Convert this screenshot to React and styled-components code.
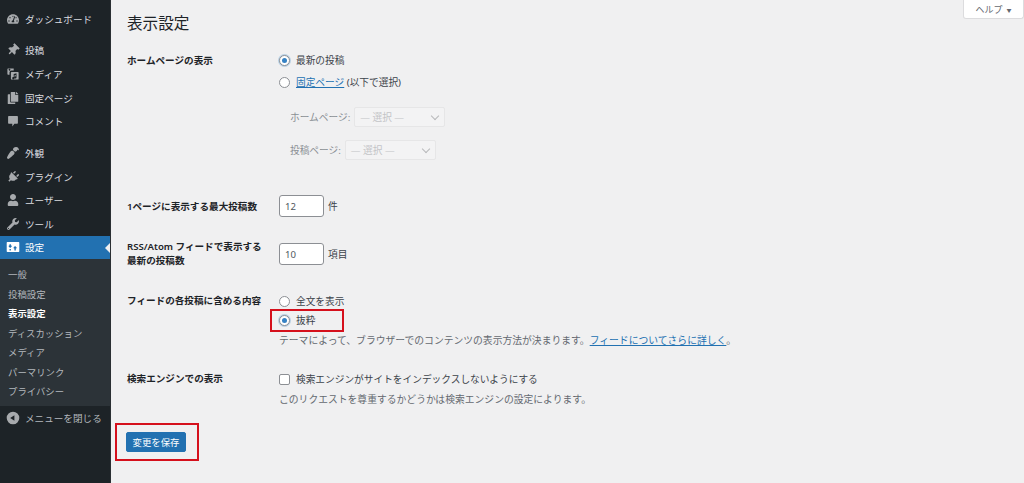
import React from 'react'
import styled, { createGlobalStyle } from 'styled-components'
import { FaTachometerAlt, FaThumbtack, FaCopy, FaPaintBrush, FaPlug, FaUser, FaWrench } from 'react-icons/fa'

const GlobalStyle = createGlobalStyle`
    html, body { margin: 0; padding: 0; height: 483px; overflow: hidden; background: #f0f0f1; }
    body { font-family: "Noto Sans", "Noto Sans CJK JP", sans-serif; color: #3c434a; }
    * { box-sizing: border-box; }
`

const MediaIcon = () => (
    <svg viewBox="0 0 20 20" width="14" height="14" fill="currentColor">
        <path d="M3 2h8v3H8a3 3 0 0 0-3 3v3H3a1 1 0 0 1-1-1V3a1 1 0 0 1 1-1zm3.2 2a1.2 1.2 0 1 0 0 .01z" fillRule="evenodd" />
        <path d="M8 7h9a1 1 0 0 1 1 1v9a1 1 0 0 1-1 1H8a1 1 0 0 1-1-1V8a1 1 0 0 1 1-1zm7 2-4 1v4.4a1.6 1.6 0 1 0 1 1.5V12l2-.5v2a1.6 1.6 0 1 0 1 1.5z" fillRule="evenodd" />
    </svg>
)

const CommentIcon = () => (
    <svg viewBox="0 0 20 20" width="14" height="14" fill="currentColor">
        <path d="M4 3h12a1 1 0 0 1 1 1v9a1 1 0 0 1-1 1h-4l-3 4v-4H4a1 1 0 0 1-1-1V4a1 1 0 0 1 1-1z" />
    </svg>
)

const SettingsIcon = () => (
    <svg viewBox="0 0 20 20" width="14" height="14" fill="currentColor">
        <path d="M2 3h16a1 1 0 0 1 1 1v12a1 1 0 0 1-1 1H2a1 1 0 0 1-1-1V4a1 1 0 0 1 1-1zm3 3v2H4v2h1v1h2v-1h1V8H7V6zm7 3v1h-1v2h1v3h2v-3h1v-2h-1V9zm-7 4v2h2v-2z" fillRule="evenodd" />
    </svg>
)

const CollapseIcon = () => (
    <svg viewBox="0 0 20 20" width="14" height="14" fill="currentColor">
        <path d="M10 1a9 9 0 1 1 0 18 9 9 0 0 1 0-18zm2 5-6 4 6 4z" fillRule="evenodd" />
    </svg>
)

const menuGroups = [
    [{ label: 'ダッシュボード', icon: <FaTachometerAlt /> }],
    [
        { label: '投稿', icon: <FaThumbtack />, tilt: 45 },
        { label: 'メディア', icon: <MediaIcon /> },
        { label: '固定ページ', icon: <FaCopy /> },
        { label: 'コメント', icon: <CommentIcon /> },
    ],
    [
        { label: '外観', icon: <FaPaintBrush />, tilt: 180 },
        { label: 'プラグイン', icon: <FaPlug />, tilt: 45 },
        { label: 'ユーザー', icon: <FaUser /> },
        { label: 'ツール', icon: <FaWrench /> },
    ],
]

const subItems = ['一般', '投稿設定', '表示設定', 'ディスカッション', 'メディア', 'パーマリンク', 'プライバシー']

const App = () => {
    return (
        <Page>
            <GlobalStyle />
            <Sidebar>
                {menuGroups.map((group, i) => (
                    <MenuGroup key={i}>
                        {group.map((item) => (
                            <MenuItem key={item.label}>
                                <MenuIcon $tilt={item.tilt}>{item.icon}</MenuIcon>
                                {item.label}
                            </MenuItem>
                        ))}
                    </MenuGroup>
                ))}
                <ActiveItem>
                    <MenuIcon $active><SettingsIcon /></MenuIcon>
                    設定
                </ActiveItem>
                <SubMenu>
                    {subItems.map((item) => (
                        <SubItem key={item} $current={item === '表示設定'}>{item}</SubItem>
                    ))}
                </SubMenu>
                <CollapseItem>
                    <MenuIcon><CollapseIcon /></MenuIcon>
                    メニューを閉じる
                </CollapseItem>
            </Sidebar>

            <Main>
                <HelpTab>ヘルプ<HelpArrow>▼</HelpArrow></HelpTab>
                <Title>表示設定</Title>

                <FormRow $height={143}>
                    <Label $pad={1}>ホームページの表示</Label>
                    <Field>
                        <OptionLine><Radio $checked />最新の投稿</OptionLine>
                        <OptionLine $gap={8}><Radio /><TextLink>固定ページ</TextLink>&nbsp;(以下で選択)</OptionLine>
                        <SelectLine $top={18}>
                            ホームページ:
                            <FakeSelect>— 選択 —<SelectArrow /></FakeSelect>
                        </SelectLine>
                        <SelectLine $top={13}>
                            投稿ページ:
                            <FakeSelect>— 選択 —<SelectArrow /></FakeSelect>
                        </SelectLine>
                    </Field>
                </FormRow>

                <FormRow $height={48}>
                    <Label $pad={4}>1ページに表示する最大投稿数</Label>
                    <Field>
                        <NumberLine><NumberBox>12</NumberBox>件</NumberLine>
                    </Field>
                </FormRow>

                <FormRow $height={50}>
                    <Label $pad={-4}>RSS/Atom フィードで表示する<br />最新の投稿数</Label>
                    <Field>
                        <NumberLine><NumberBox>10</NumberBox>項目</NumberLine>
                    </Field>
                </FormRow>

                <FormRow $height={78}>
                    <Label>フィードの各投稿に含める内容</Label>
                    <Field>
                        <OptionLine><Radio />全文を表示</OptionLine>
                        <Marked>
                            <OptionLine $gap={5}><Radio $checked />抜粋</OptionLine>
                            <RedBox $top={1} $right={-29} $bottom={-5} $left={-9} />
                        </Marked>
                        <Description $top={7}>
                            テーマによって、ブラウザーでのコンテンツの表示方法が決まります。<TextLink>フィードについてさらに詳しく</TextLink>。
                        </Description>
                    </Field>
                </FormRow>

                <FormRow $height={57}>
                    <Label>検索エンジンでの表示</Label>
                    <Field>
                        <OptionLine><CheckBox />検索エンジンがサイトをインデックスしないようにする</OptionLine>
                        <Description $top={7}>このリクエストを尊重するかどうかは検索エンジンの設定によります。</Description>
                    </Field>
                </FormRow>

                <Marked $inline>
                    <SaveButton>変更を保存</SaveButton>
                    <RedBox $top={-9} $right={-13} $bottom={-9} $left={-11} />
                </Marked>
            </Main>
        </Page>
    )
}

const Page = styled.div`
    display: flex;
    width: 1024px;
    height: 483px;
    overflow: hidden;
`

const Sidebar = styled.nav`
    width: 111px;
    flex-shrink: 0;
    background: #1d2327;
    padding-top: 7px;
    border-right: 1px solid #2a2f33;
`

const MenuGroup = styled.div`
    margin-bottom: 8.1px;
`

const MenuItem = styled.div`
    display: flex;
    align-items: center;
    height: 23.6px;
    padding-left: 6px;
    font-size: 9.6px;
    color: #dcdee0;
`

const MenuIcon = styled.span`
    display: flex;
    align-items: center;
    justify-content: center;
    width: 14px;
    margin-right: 5px;
    font-size: 12px;
    color: ${(props) => (props.$active ? '#fff' : '#a7aaad')};
    transform: rotate(${(props) => props.$tilt || 0}deg);
`

const ActiveItem = styled(MenuItem)`
    position: relative;
    margin-top: -8.1px;
    background: #2271b1;
    color: #fff;

    &::after {
        content: '';
        position: absolute;
        right: 0;
        top: 7px;
        border: 5px solid transparent;
        border-right-color: #f0f0f1;
        border-left-width: 0;
    }
`

const SubMenu = styled.div`
    background: #2c3338;
    padding: 6px 0 4px;
`

const SubItem = styled.div`
    height: 19.5px;
    line-height: 19.5px;
    padding-left: 8px;
    font-size: 9.4px;
    color: ${(props) => (props.$current ? '#fff' : '#b4b9be')};
    font-weight: ${(props) => (props.$current ? 700 : 400)};
`

const CollapseItem = styled(MenuItem)`
    margin-top: 1px;
    color: #b4b9be;
`

const Main = styled.main`
    position: relative;
    flex: 1;
    padding: 12px 0 0 16px;
`

const HelpTab = styled.div`
    position: absolute;
    top: 0;
    right: 0;
    width: 61px;
    height: 19px;
    display: flex;
    align-items: center;
    justify-content: center;
    gap: 4px;
    background: #fff;
    border: 1px solid #dcdcde;
    border-top: 0;
    border-radius: 0 0 3px 3px;
    font-size: 9px;
    color: #646970;
`

const HelpArrow = styled.span`
    font-size: 5px;
`

const Title = styled.h1`
    margin: 0 0 19px;
    height: 22px;
    line-height: 22px;
    font-size: 15.6px;
    font-weight: 400;
    color: #1d2327;
`

const FormRow = styled.div`
    display: grid;
    grid-template-columns: 152px 1fr;
    height: ${(props) => props.$height}px;
`

const Label = styled.div`
    font-size: 9.6px;
    font-weight: 600;
    line-height: 14px;
    color: #1d2327;
    padding-top: ${(props) => (props.$pad > 0 ? props.$pad : 0)}px;
    margin-top: ${(props) => (props.$pad < 0 ? props.$pad : 0)}px;
`

const Field = styled.div`
    display: flex;
    flex-direction: column;
    align-items: flex-start;
    font-size: 9.7px;
`

const OptionLine = styled.div`
    display: flex;
    align-items: center;
    height: 14px;
    margin-top: ${(props) => props.$gap || 0}px;
    color: #3c434a;
`

const Radio = styled.span`
    position: relative;
    display: inline-block;
    flex-shrink: 0;
    width: 11px;
    height: 11px;
    margin-right: 6px;
    border-radius: 50%;
    background: #fff;
    border: 1px solid #8c8f94;

    ${(props) => props.$checked && `
        box-shadow: 0 0 0 1px #b8d0e4;
        &::after {
            content: '';
            position: absolute;
            left: 2px;
            top: 2px;
            width: 5px;
            height: 5px;
            border-radius: 50%;
            background: #3582c4;
        }
    `}
`

const CheckBox = styled.span`
    flex-shrink: 0;
    width: 11px;
    height: 11px;
    margin-right: 6px;
    border-radius: 2px;
    background: #fff;
    border: 1px solid #8c8f94;
`

const TextLink = styled.span`
    color: #2271b1;
    text-decoration: underline;
`

const SelectLine = styled.div`
    display: flex;
    align-items: center;
    height: 20px;
    margin: ${(props) => props.$top}px 0 0 11px;
    color: #8a8f94;
`

const FakeSelect = styled.span`
    position: relative;
    display: flex;
    align-items: center;
    width: 91px;
    height: 20px;
    margin-left: 4px;
    padding-left: 5px;
    background: #f3f3f4;
    border: 1px solid #e6e6e7;
    border-radius: 2px;
    color: #c3c4c7;
`

const SelectArrow = styled.span`
    position: absolute;
    right: 6px;
    top: 5px;
    width: 6px;
    height: 6px;
    border-right: 1px solid #b8b9bb;
    border-bottom: 1px solid #b8b9bb;
    transform: rotate(45deg);
`

const NumberLine = styled.div`
    display: flex;
    align-items: center;
    gap: 4px;
    margin-top: -1px;
    color: #3c434a;
`

const NumberBox = styled.span`
    display: flex;
    align-items: center;
    width: 45px;
    height: 22px;
    padding-left: 5px;
    background: #fff;
    border: 1px solid #8c8f94;
    border-radius: 3px;
    font-size: 9.6px;
    color: #50575e;
`

const Marked = styled.div`
    position: relative;
    display: ${(props) => (props.$inline ? 'inline-block' : 'block')};
    margin-left: ${(props) => (props.$inline ? -1 : 0)}px;
`

const RedBox = styled.span`
    position: absolute;
    top: ${(props) => props.$top}px;
    right: ${(props) => props.$right}px;
    bottom: ${(props) => props.$bottom}px;
    left: ${(props) => props.$left}px;
    border: 2px solid #d5101c;
    pointer-events: none;
`

const Description = styled.div`
    height: 14px;
    line-height: 14px;
    font-size: 9.8px;
    margin-top: ${(props) => props.$top}px;
    color: #646970;
    white-space: nowrap;
`

const SaveButton = styled.button`
    display: block;
    width: 60px;
    height: 20px;
    margin: 0;
    padding: 0;
    background: #2271b1;
    border: 1px solid #2271b1;
    border-radius: 2px;
    font-family: inherit;
    font-size: 9.4px;
    color: #fff;
`

export default App
